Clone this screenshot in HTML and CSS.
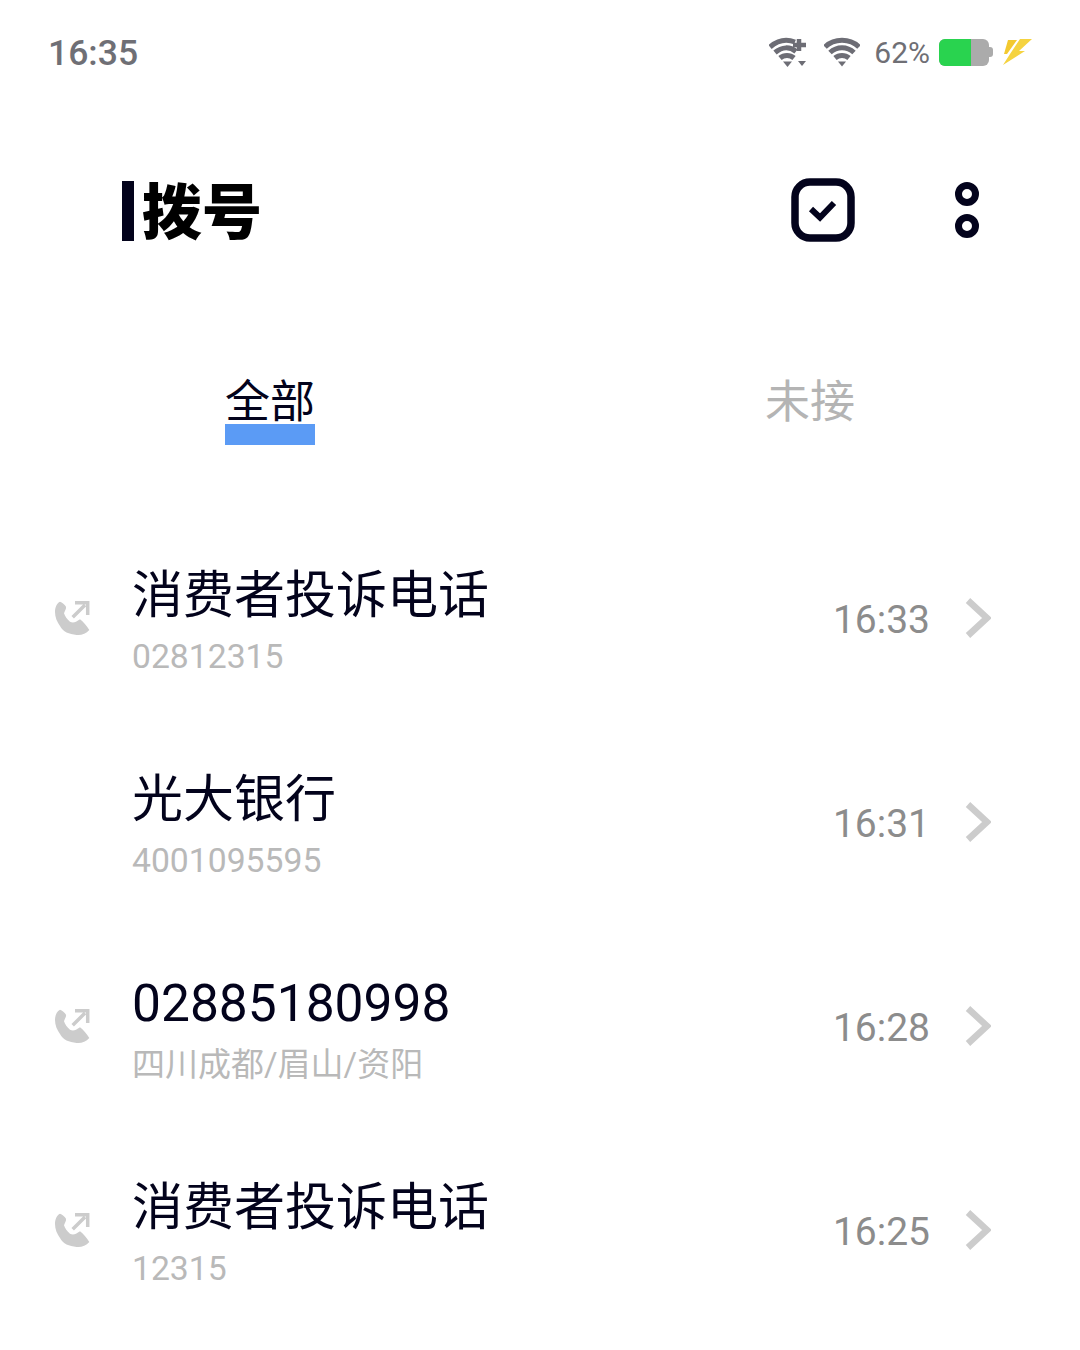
FILE: index.html
```html
<!DOCTYPE html>
<html lang="zh-CN">
<head>
    <meta charset="UTF-8">
    <meta name="viewport" content="width=device-width, initial-scale=1.0">
    <title>拨号</title>
    <link rel="stylesheet" href="styles.css">
</head>
<body>
    <div class="status-bar">
        <span class="status-time">16:35</span>
        <div class="status-icons">
            <svg class="icon-wifi-plus" width="40" height="32" viewBox="0 0 40 32">
                <path d="M1 11C9 4 18 3 26 6" class="wifi-arc"/>
                <path d="M6 16.500C13 10.500 21 10.500 27 15.500" class="wifi-arc"/>
                <path d="M11 22C15 18.500 21 18.500 25 22" class="wifi-arc"/>
                <path d="M14 25.500H23L18.500 31Z" class="wifi-fill"/>
                <path d="M30 3V15M24 9H37" class="wifi-plus"/>
                <path d="M29 25H37L33 30Z" class="wifi-fill"/>
            </svg>
            <svg class="icon-wifi" width="36" height="30" viewBox="0 0 36 30">
                <path d="M1 10C10 1 26 1 35 10" class="wifi-arc"/>
                <path d="M6 15.500C13 9 23 9 30 15.500" class="wifi-arc"/>
                <path d="M11 21C15 17.500 21 17.500 25 21" class="wifi-arc"/>
                <path d="M14 24.500H22L18 29.500Z" class="wifi-fill"/>
            </svg>
            <span class="status-battery-text">62%</span>
            <div class="battery">
                <div class="battery-body">
                    <div class="battery-level"></div>
                </div>
                <div class="battery-tip"></div>
            </div>
            <svg class="icon-bolt" width="30" height="28" viewBox="0 0 30 28">
                <path d="M6 2H15L5 16H2Z" fill="#f3c92f"/>
                <path d="M18 1H30L17 13H23L1 27L8 16Z" fill="#f5d340"/>
            </svg>
        </div>
    </div>

    <header class="page-header">
        <div class="page-title">
            <span class="title-bar"></span>
            <h1>拨号</h1>
        </div>
        <div class="header-actions">
            <svg width="64" height="64" viewBox="0 0 64 64">
                <rect x="4" y="4" width="56" height="56" rx="15" fill="none" stroke="#03031c" stroke-width="7.500"/>
                <path d="M20 31L29 39.500L43 25" fill="none" stroke="#03031c" stroke-width="6"/>
            </svg>
            <svg width="24" height="56" viewBox="0 0 24 56">
                <circle cx="12" cy="12" r="8.500" fill="none" stroke="#03031c" stroke-width="7"/>
                <circle cx="12" cy="44" r="8.500" fill="none" stroke="#03031c" stroke-width="7"/>
            </svg>
        </div>
    </header>

    <nav class="tabs">
        <div class="tab tab-active"><span class="tab-label">全部</span></div>
        <div class="tab"><span class="tab-label">未接</span></div>
    </nav>

    <ul class="call-list">
        <li class="call-row">
            <div class="call-icon">
                <svg width="36" height="36" viewBox="0 0 36 36"><use href="#outgoing"/></svg>
            </div>
            <div class="call-info">
                <div class="call-name">消费者投诉电话</div>
                <div class="call-sub">02812315</div>
            </div>
            <span class="call-time">16:33</span>
            <svg class="chevron" width="26" height="40" viewBox="0 0 26 40"><path d="M3 2.500L22 20L3 37.500"/></svg>
        </li>
        <li class="call-row">
            <div class="call-icon"></div>
            <div class="call-info">
                <div class="call-name">光大银行</div>
                <div class="call-sub">4001095595</div>
            </div>
            <span class="call-time">16:31</span>
            <svg class="chevron" width="26" height="40" viewBox="0 0 26 40"><path d="M3 2.500L22 20L3 37.500"/></svg>
        </li>
        <li class="call-row">
            <div class="call-icon">
                <svg width="36" height="36" viewBox="0 0 36 36"><use href="#outgoing"/></svg>
            </div>
            <div class="call-info">
                <div class="call-name call-number">02885180998</div>
                <div class="call-sub call-region">四川成都/眉山/资阳</div>
            </div>
            <span class="call-time">16:28</span>
            <svg class="chevron" width="26" height="40" viewBox="0 0 26 40"><path d="M3 2.500L22 20L3 37.500"/></svg>
        </li>
        <li class="call-row">
            <div class="call-icon">
                <svg width="36" height="36" viewBox="0 0 36 36"><use href="#outgoing"/></svg>
            </div>
            <div class="call-info">
                <div class="call-name">消费者投诉电话</div>
                <div class="call-sub">12315</div>
            </div>
            <span class="call-time">16:25</span>
            <svg class="chevron" width="26" height="40" viewBox="0 0 26 40"><path d="M3 2.500L22 20L3 37.500"/></svg>
        </li>
    </ul>

    <svg class="icon-defs" width="0" height="0">
        <defs>
            <g id="outgoing">
                <path d="M5 0.700C7 1.500 10 3.500 11 5.700C11.500 8 9.500 10 9 12.300C10 15.500 12 18.500 15 20.700C17 21.800 19 21.700 21 20.700L25 18.300C28 20.500 32 25 34.300 29C31 33 26 34.500 21.700 34C14 33 8 31 5 25C2 21 0 16 0 11C0 6 2 2 5 0.700Z" fill="#cccccc"/>
                <path d="M17.700 16.300L30 4M20 1.700H32.700V14" fill="none" stroke="#cccccc" stroke-width="3.500"/>
            </g>
        </defs>
    </svg>
</body>
</html>
```

FILE: styles.css
```css
body {
    font-family: Roboto, "Noto Sans CJK SC", sans-serif;
    margin: 0;
    padding: 0;
    background-color: #fff;
    color: #03031c;
    width: 1080px;
    height: 1350px;
    overflow: hidden;
}
/* Status bar */
.status-bar {
    display: flex;
    justify-content: space-between;
    align-items: center;
    height: 32px;
    padding: 37px 48px 0 48px;
    margin-bottom: -1px;
    color: #6f6f75;
}
.status-time {
    font-size: 35.500px;
    font-weight: 500;
}
.status-icons {
    display: flex;
    align-items: center;
    margin-top: -2px;
}
.wifi-arc {
    fill: none;
    stroke: #6d6d75;
    stroke-width: 5;
}
.wifi-fill {
    fill: #6d6d75;
}
.wifi-plus {
    fill: none;
    stroke: #6d6d75;
    stroke-width: 4.500;
}
.icon-wifi-plus {
    margin-right: 15px;
}
.icon-wifi {
    margin-right: 14px;
}
.status-battery-text {
    font-size: 30px;
    margin-right: 9px;
}
.battery {
    display: flex;
    align-items: center;
    margin-right: 9px;
}
.battery-body {
    width: 50px;
    height: 27px;
    background: #ababab;
    border-radius: 6px;
    overflow: hidden;
}
.battery-level {
    width: 32px;
    height: 100%;
    background: #29d34f;
}
.battery-tip {
    width: 4px;
    height: 10px;
    background: #ababab;
    border-radius: 0 3px 3px 0;
}
/* Header */
.page-header {
    display: flex;
    justify-content: space-between;
    align-items: center;
    margin-top: 110px;
    padding: 0 101px 0 122px;
    height: 64px;
}
.page-title {
    display: flex;
    align-items: center;
    gap: 8px;
}
.title-bar {
    display: block;
    width: 12px;
    height: 60px;
    margin-top: 2px;
    background: #03031c;
}
.page-title h1 {
    margin: 8px 0 0;
    font-size: 60px;
    line-height: 64px;
    font-weight: 900;
    color: #000;
}
.header-actions {
    display: flex;
    align-items: center;
    gap: 100px;
}
/* Tabs */
.tabs {
    display: grid;
    grid-template-columns: 1fr 1fr;
    margin-top: 131px;
}
.tab {
    display: flex;
    justify-content: center;
}
.tab-label {
    display: block;
    font-size: 45px;
    line-height: 60px;
    height: 70px;
    color: #b4b4b4;
}
.tab-active .tab-label {
    color: #03031c;
    height: 51px;
    border-bottom: 21px solid #5b9bf5;
}
/* Call list */
.call-list {
    list-style: none;
    margin: 72px 0 0;
    padding: 0;
}
.call-row {
    display: flex;
    align-items: center;
    height: 204px;
    padding-right: 89px;
}
.call-icon {
    width: 132px;
    padding-left: 55px;
    box-sizing: border-box;
    height: 36px;
}
.call-info {
    flex: 1;
    padding-top: 4px;
}
.call-name {
    font-size: 51px;
    line-height: 62px;
    color: #03031c;
}
.call-number {
    font-size: 51.500px;
}
.call-sub {
    font-size: 33.700px;
    line-height: 40px;
    margin-top: 10px;
    color: #b9b9b9;
}
.call-region {
    font-size: 33px;
}
.call-time {
    font-size: 39px;
    color: #8c8c8c;
    margin-top: 2px;
    margin-right: 34px;
}
.chevron {
    fill: none;
    stroke: #cccccc;
    stroke-width: 6.500;
    margin-bottom: 2px;
    margin-left: 1px;
}
.icon-defs {
    display: block;
}
```
